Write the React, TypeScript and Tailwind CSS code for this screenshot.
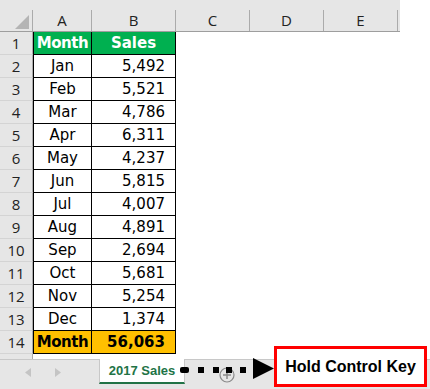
import React from "react";

const data: [string, string][] = [
  ["Jan", "5,492"],
  ["Feb", "5,521"],
  ["Mar", "4,786"],
  ["Apr", "6,311"],
  ["May", "4,237"],
  ["Jun", "5,815"],
  ["Jul", "4,007"],
  ["Aug", "4,891"],
  ["Sep", "2,694"],
  ["Oct", "5,681"],
  ["Nov", "5,254"],
  ["Dec", "1,374"],
];

const cellFont = { fontFamily: '"DejaVu Sans", Verdana, sans-serif' };
const hdrFont = { fontFamily: '"Open Sans", "Liberation Sans", sans-serif' };

function RowHead({ n }: { n: number }) {
  return (
    <div
      className="w-[33px] shrink-0 border-r border-b border-r-[#ababab] border-b-[#d4d4d4] bg-[#e6e6e6] flex items-center justify-center text-[15px] text-[#222]"
      style={hdrFont}
    >
      {n}
    </div>
  );
}

export default function App() {
  return (
    <div className="relative w-[430px] h-[389px] bg-white overflow-hidden">
      {/* column header */}
      <div className="w-[400px] h-[10px] bg-[#e6e6e6]" />
      <div className="flex w-[400px] h-[22px] bg-[#e6e6e6] border-b border-[#9e9e9e]" style={hdrFont}>
        <div className="relative w-[33px] shrink-0 border-r border-[#ababab]">
          <svg className="absolute left-[15px] top-[5px]" width="14" height="14" viewBox="0 0 14 14">
            <polygon points="14,0 14,14 0,14" fill="#b4b4b4" />
          </svg>
        </div>
        {[
          ["A", "w-[59px]"],
          ["B", "w-[84px]"],
          ["C", "w-[74px]"],
          ["D", "w-[74px]"],
          ["E", "w-[74px]"],
        ].map(([l, w]) => (
          <div
            key={l}
            className={`${w} shrink-0 border-r border-[#ababab] flex items-center justify-center text-[15px] text-[#222]`}
          >
            {l}
          </div>
        ))}
      </div>

      {/* row 1 */}
      <div className="flex h-[23px]">
        <RowHead n={1} />
        <div
          className="w-[59px] shrink-0 bg-[#00b050] border-l border-r border-b border-black flex items-center justify-center text-white font-bold text-[15px] tracking-[-0.5px]"
          style={cellFont}
        >
          Month
        </div>
        <div
          className="w-[84px] shrink-0 bg-[#00b050] border-r border-b border-black flex items-center justify-center text-white font-bold text-[15px]"
          style={cellFont}
        >
          Sales
        </div>
      </div>

      {data.map(([m, v], i) => (
        <div key={m} className="flex h-[23px]">
          <RowHead n={i + 2} />
          <div
            className="w-[59px] shrink-0 border-l border-r border-b border-black flex items-center justify-center text-black text-[15px]"
            style={cellFont}
          >
            {m}
          </div>
          <div
            className="w-[84px] shrink-0 border-r border-b border-black flex items-center justify-end pr-[10px] text-black text-[15px]"
            style={cellFont}
          >
            {v}
          </div>
        </div>
      ))}

      {/* row 14 */}
      <div className="flex h-[23px]">
        <RowHead n={14} />
        <div
          className="w-[59px] shrink-0 bg-[#ffc000] border-l border-r border-b border-black flex items-center justify-center text-black font-bold text-[15px] tracking-[-0.5px]"
          style={cellFont}
        >
          Month
        </div>
        <div
          className="w-[84px] shrink-0 bg-[#ffc000] border-r border-b border-black flex items-center justify-end pr-[10px] text-black font-bold text-[15px]"
          style={cellFont}
        >
          56,063
        </div>
      </div>

      {/* row 15 partial */}
      <div className="flex h-[5px]">
        <div className="w-[33px] shrink-0 border-r border-[#ababab] bg-[#e6e6e6]" />
      </div>

      {/* tab bar */}
      <div className="flex h-[30px] bg-[#e6e6e6] border-t border-[#c8c8c8]">
        <div className="w-[99px] shrink-0 flex items-center pb-[4px]">
          <svg className="ml-[25px]" width="6" height="9" viewBox="0 0 6 9">
            <polygon points="6,0 6,9 0,4.5" fill="#c4c4c4" />
          </svg>
          <svg className="ml-[24px]" width="6" height="9" viewBox="0 0 6 9">
            <polygon points="0,0 0,9 6,4.5" fill="#c4c4c4" />
          </svg>
        </div>
        <div className="w-[86px] h-[25px] -mt-px shrink-0 bg-white border-l border-r border-[#c8c8c8] border-b-2 border-b-[#217346] flex items-center justify-center">
          <span
            className="text-[13px] font-bold text-[#217346]"
            style={{ fontFamily: '"Liberation Sans", Arial, sans-serif' }}
          >
            2017 Sales
          </span>
        </div>
        <div className="flex-1" />
      </div>

      {/* new sheet circle */}
      <svg className="absolute left-[219px] top-[367px]" width="16" height="16" viewBox="0 0 16 16">
        <circle cx="8" cy="8" r="7" fill="none" stroke="#8a8a8a" strokeWidth="1.2" />
        <line x1="8" y1="4" x2="8" y2="12" stroke="#8a8a8a" strokeWidth="1.5" />
        <line x1="4" y1="8" x2="12" y2="8" stroke="#8a8a8a" strokeWidth="1.5" />
      </svg>

      {/* dotted arrow */}
      <div className="absolute left-[180px] top-[367px] w-[9px] h-[6px] rounded-[2px] bg-black" />
      <div className="absolute left-[198px] top-[367px] w-[6px] h-[6px] bg-black" />
      <div className="absolute left-[213px] top-[367px] w-[6px] h-[6px] bg-black" />
      <div className="absolute left-[226px] top-[367px] w-[6px] h-[6px] bg-black" />
      <div className="absolute left-[240px] top-[367px] w-[6px] h-[6px] bg-black" />
      <svg className="absolute left-[253px] top-[358px]" width="21" height="21" viewBox="0 0 21 21">
        <polygon points="0,0 21,10.5 0,21" fill="#000" />
      </svg>

      {/* callout */}
      <div className="absolute left-[274px] top-[346px] w-[153px] h-[41px] bg-white border-[3px] border-[#ff0000] flex items-center justify-center">
        <span
          className="text-[16px] font-bold text-black"
          style={{ fontFamily: '"Liberation Sans", Arial, sans-serif' }}
        >
          Hold Control Key
        </span>
      </div>
    </div>
  );
}
